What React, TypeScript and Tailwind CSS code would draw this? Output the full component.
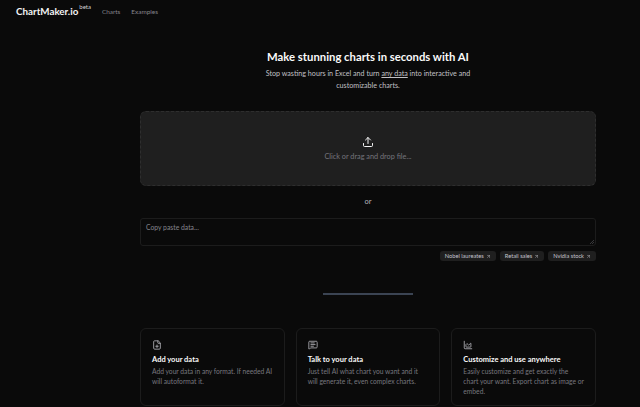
import React from 'react'
import { ArrowUpRight, ChartArea, FilePlus, MessageSquareText, Upload } from 'lucide-react'

const samples = ['Nobel laureates', 'Retail sales', 'Nvidia stock']

const features = [
  {
    icon: FilePlus,
    title: 'Add your data',
    text: 'Add your data in any format. If needed AI will autoformat it.'
  },
  {
    icon: MessageSquareText,
    title: 'Talk to your data',
    text: 'Just tell AI what chart you want and it will generate it, even complex charts.'
  },
  {
    icon: ChartArea,
    title: 'Customize and use anywhere',
    text: 'Easily customize and get exactly the chart your want. Export chart as image or embed.'
  }
]

export default function App() {
  return (
    <div className="h-[407px] overflow-hidden bg-[#0a0a0a] font-['Lato',sans-serif] text-white">
      {/* Nav */}
      <header className="flex h-[24px] items-center pl-[16px]">
        <div className="relative flex items-center">
          <span className="text-[9.8px] font-bold leading-none text-[#f4f4f5]">ChartMaker.io</span>
          <span className="relative top-[-5px] ml-[1px] text-[6px] leading-none text-[#d4d4d8]">beta</span>
        </div>
        <nav className="ml-[11px] flex gap-[11px] text-[6.4px] text-[#85858c]">
          <span>Charts</span>
          <span>Examples</span>
        </nav>
      </header>

      <main className="ml-[140px] w-[456px]">
        <div className="flex flex-col items-center pt-[25px] text-center">
          <h1 className="text-[11.3px] font-bold leading-[16px] text-[#fafafa]">Make stunning charts in seconds with AI</h1>
          <p className="mt-[3px] w-[215px] text-[7.15px] leading-[12px] text-[#c0c0c5]">
            Stop wasting hours in Excel and turn <span className="underline">any data</span> into interactive and customizable charts.
          </p>
        </div>

        {/* Upload */}
        <div className="mt-[19px] flex h-[75px] flex-col items-center justify-center rounded-[6px] border border-dashed border-[#2e2e2e] bg-[#1f1f1f]">
          <Upload className="h-[12px] w-[12px] text-[#f4f4f5]" strokeWidth={2} />
          <span className="mt-[4px] text-[7.3px] leading-[10px] text-[#75757c]">Click or drag and drop file...</span>
        </div>

        <div className="mt-[11px] text-center text-[7.5px] leading-[10px] text-[#b4b4ba]">or</div>

        {/* Paste */}
        <div className="relative mt-[11px] h-[28px] rounded-[3px] border border-[#1c1c1c] px-[5px] pt-[3px] text-[6.8px] leading-[10px] text-[#85858c]">
          Copy paste data...
          <svg className="absolute bottom-[1px] right-[1px] h-[4px] w-[4px] text-[#55555a]" viewBox="0 0 4 4" fill="none" stroke="currentColor" strokeWidth="0.6">
            <path d="M0 4 4 0M2 4 4 2" />
          </svg>
        </div>

        <div className="mt-[5px] flex justify-end gap-[4px]">
          {samples.map(name => (
            <span key={name} className="flex h-[10px] items-center gap-[2px] rounded-[3px] bg-[#1f1f1f] px-[5px] text-[5.7px] leading-none text-[#c4c4cc]">
              {name}
              <ArrowUpRight className="h-[5px] w-[5px]" strokeWidth={2} />
            </span>
          ))}
        </div>

        {/* Progress line */}
        <div className="mt-[32px] flex justify-center">
          <div className="h-[2px] w-[90px] bg-[#3b4453]" />
        </div>

        {/* Features */}
        <div className="mt-[33px] grid grid-cols-3 gap-[11px]">
          {features.map(({ icon: Icon, title, text }) => (
            <div key={title} className="h-[78px] rounded-[6px] border border-[#1c1c1c] px-[11px] pt-[11px]">
              <Icon className="h-[10px] w-[10px] text-[#b4b4ba]" strokeWidth={2} />
              <h3 className="mt-[5px] text-[7.5px] font-bold leading-[10px] text-[#fafafa]">{title}</h3>
              <p className="mt-[1px] text-[6.7px] leading-[10px] text-[#77777e]">{text}</p>
            </div>
          ))}
        </div>
      </main>
    </div>
  )
}
